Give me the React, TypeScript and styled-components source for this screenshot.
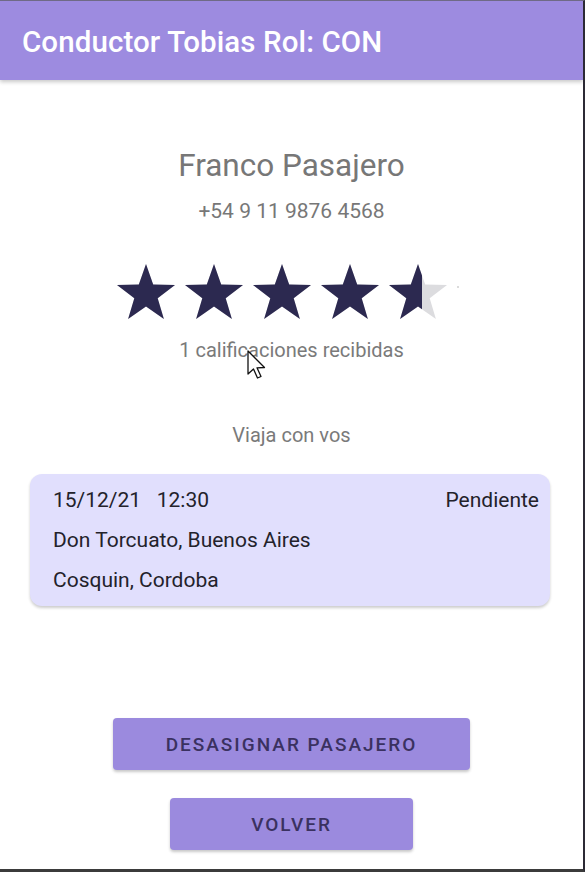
import React from "react";
import styled, { createGlobalStyle } from "styled-components";

const Global = createGlobalStyle`
  html, body { margin: 0; padding: 0; background: #ffffff; }
  body { font-family: Roboto, "Noto Sans", Arial, sans-serif; }
  * { box-sizing: border-box; }
`;

const Frame = styled.div`
  width: 585px;
  height: 872px;
  border-top: 1px solid #6f6a86;
  border-right: 2px solid #2c2a35;
  border-bottom: 3px solid #3b3b3b;
  display: flex;
  flex-direction: column;
  position: relative;
  overflow: hidden;
  background: #ffffff;
`;

const AppBar = styled.header`
  height: 79px;
  background: #9d8be0;
  display: flex;
  align-items: center;
  padding: 2px 0 0 22px;
  box-shadow: 0 2px 4px rgba(0, 0, 0, 0.22);
  position: relative;
  z-index: 1;
`;

const Title = styled.h1`
  margin: 0;
  color: #ffffff;
  font-size: 29.5px;
  font-weight: 500;
  letter-spacing: 0.1px;
`;

const Body = styled.main`
  flex: 1;
  display: flex;
  flex-direction: column;
  align-items: center;
  padding-top: 66px;
`;

const Name = styled.div`
  font-size: 31.5px;
  color: #777777;
  line-height: 40px;
`;

const Phone = styled.div`
  font-size: 21px;
  color: #777777;
  margin-top: 13px;
  line-height: 24px;
`;

const Stars = styled.div`
  display: flex;
  gap: 10px;
  margin-top: 41px;
  margin-left: -20px;
  position: relative;
`;

const Dot = styled.span`
  position: absolute;
  right: -12px;
  top: 22px;
  width: 2px;
  height: 2px;
  border-radius: 1px;
  background: #cfcfcf;
`;

const Caption = styled.div<{ $mt: number }>`
  font-size: 20px;
  color: #7a7a7a;
  line-height: 22px;
  margin-top: ${(p) => p.$mt}px;
`;

const Card = styled.section`
  align-self: stretch;
  margin: 28px 33px 0 30px;
  background: #e1dffd;
  border-radius: 12px;
  box-shadow: 0 2px 3px rgba(0, 0, 0, 0.2);
  padding: 14px 11px 14px 23px;
  display: flex;
  flex-direction: column;
  gap: 16px;
`;

const Row = styled.div`
  display: flex;
  justify-content: space-between;
  font-size: 21px;
  color: #23222b;
  line-height: 24px;
`;

const Buttons = styled.div`
  display: flex;
  flex-direction: column;
  align-items: center;
  gap: 28px;
  margin-top: 112px;
`;

const Button = styled.button<{ $w: number }>`
  width: ${(p) => p.$w}px;
  height: 52px;
  border: none;
  border-radius: 4px;
  background: #9b8ade;
  color: #3a3160;
  font-family: Roboto, "Noto Sans", Arial, sans-serif;
  font-size: 19px;
  font-weight: 500;
  letter-spacing: 2px;
  box-shadow: 0 2px 3px rgba(0, 0, 0, 0.22);
`;

const Cursor = styled.svg`
  position: absolute;
  left: 247px;
  top: 349px;
  z-index: 2;
`;

const STAR =
  "M29 0 L36.2 20.6 L58 21 L40.7 34.2 L46.9 55 L29 42.6 L11.1 55 L17.3 34.2 L0 21 L21.8 20.6 Z";

const Star = ({ fill }: { fill: number }) => {
  const id = `clip${Math.round(fill * 100)}`;
  return (
    <svg width="58" height="55" viewBox="0 0 58 55">
      <defs>
        <clipPath id={id}>
          <rect x="0" y="0" width={58 * fill} height="55" />
        </clipPath>
      </defs>
      <path d={STAR} fill="#dcdcdf" />
      <path d={STAR} fill="#2c2950" clipPath={`url(#${id})`} />
    </svg>
  );
};

export default function App() {
  return (
    <>
      <Global />
      <Frame>
        <AppBar>
          <Title>Conductor Tobias Rol: CON</Title>
        </AppBar>
        <Body>
          <Name>Franco Pasajero</Name>
          <Phone>+54 9 11 9876 4568</Phone>
          <Stars>
            <Star fill={1} />
            <Star fill={1} />
            <Star fill={1} />
            <Star fill={1} />
            <Star fill={0.57} />
            <Dot />
          </Stars>
          <Caption $mt={20}>1 calificaciones recibidas</Caption>
          <Caption $mt={63}>Viaja con vos</Caption>
          <Card>
            <Row>
              <span>15/12/21&nbsp;&nbsp;&nbsp;12:30</span>
              <span>Pendiente</span>
            </Row>
            <Row>
              <span>Don Torcuato, Buenos Aires</span>
            </Row>
            <Row>
              <span>Cosquin, Cordoba</span>
            </Row>
          </Card>
          <Buttons>
            <Button $w={357}>DESASIGNAR PASAJERO</Button>
            <Button $w={243}>VOLVER</Button>
          </Buttons>
        </Body>
        <Cursor width="20" height="34" viewBox="0 0 20 34">
          <path
            d="M1 1 L1 24 L6.5 19 L10.5 28 L14 26.5 L10 17.8 L17.5 17.5 Z"
            fill="#ffffff"
            stroke="#111111"
            strokeWidth="1.3"
            strokeLinejoin="round"
          />
        </Cursor>
      </Frame>
    </>
  );
}
